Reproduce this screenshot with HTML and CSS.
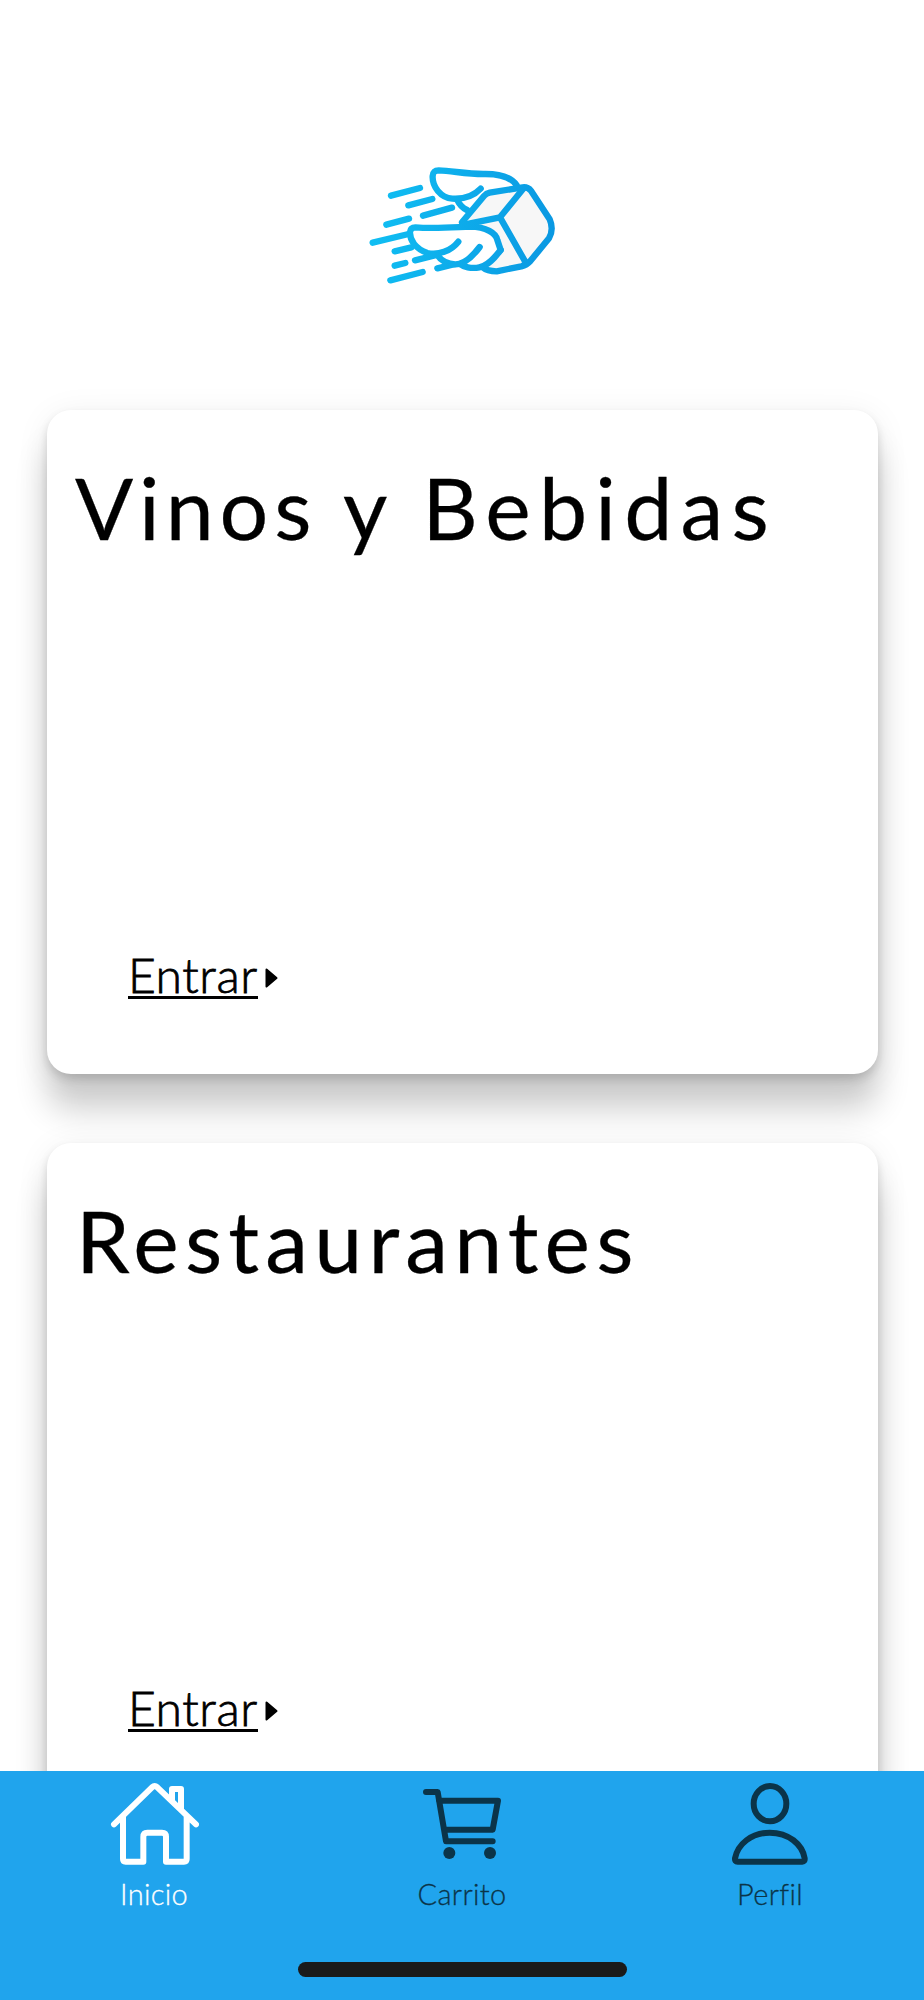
FILE: index.html
```html
<!DOCTYPE html>
<html lang="es">
<head>
  <meta charset="UTF-8" />
  <meta name="viewport" content="width=device-width, initial-scale=1.0"/>
  <title>Inicio</title>
  <link rel="stylesheet" href="styles.css">
</head>
<body>

<main class="content">
  <header class="logo-header">
    <svg class="logo" viewBox="6 0 660 450">
      <defs>
        <linearGradient id="logoBlue" gradientUnits="userSpaceOnUse" x1="60" y1="200" x2="610" y2="260">
          <stop offset="0" stop-color="#10bff3"/>
          <stop offset="1" stop-color="#0a98e2"/>
        </linearGradient>
      </defs>
      <g fill="none" stroke="url(#logoBlue)" stroke-width="19" stroke-linecap="round" stroke-linejoin="round">
        <!-- speed lines -->
        <path d="M123 137L210 114M175 166L247 147M219 197L306 173M109 224L177 206M68 278L176 252M134 304L184 292M134 347L166 339M195 331L260 315M121 391L218 366M262 355L316 342"/>
        <!-- back wing -->
        <path d="M392 116C372 137 340 148 307 146C272 143 246 110 248 78C249 66 254 61 266 61C310 63 347 72 400 72C447 71 482 79 500 106"/>
        <path d="M323 152C329 165 338 174 351 180"/>
        <!-- box -->
        <path fill="#f7f7f7" d="M336 217L402 138Q409 130 419 128L518 112Q533 110 543 122L599 208Q612 238 597 265L541 333Q530 345 514 349L440 364Q412 364 397 351L452 300Z"/>
        <path d="M519 117L450 202L529 341M450 202L342 224"/>
        <!-- front wing -->
        <path fill="#fff" stroke="none" d="M197 232L360 229C410 230 435 250 452 300L410 345C370 360 340 350 330 342C300 342 275 330 262 315C200 310 170 260 182 240Z"/>
        <path d="M325 275C302 304 265 316 232 309C196 296 179 270 180 246C181 236 186 232 196 232C250 237 310 232 360 230C409 231 438 249 442 270L452 300C433 325 414 347 388 352C363 357 340 350 330 342"/>
        <path d="M389 291C366 322 339 343 316 343C292 342 273 332 262 315"/>
      </g>
    </svg>
  </header>

  <section class="card-list">
    <article class="card">
      <h2 class="card-title card-title-drinks">Vinos y <span class="wide">Bebidas</span></h2>
      <a class="card-link" href="#"><span class="link-text">Entrar</span><svg class="caret" viewBox="0 0 13 20"><path d="M1.5 1.5L11.5 10L1.5 18.5Z"/></svg></a>
    </article>
    <article class="card">
      <h2 class="card-title card-title-food">Restaurantes</h2>
      <a class="card-link" href="#"><span class="link-text">Entrar</span><svg class="caret" viewBox="0 0 13 20"><path d="M1.5 1.5L11.5 10L1.5 18.5Z"/></svg></a>
    </article>
  </section>
</main>

<nav class="tab-bar">
  <div class="tabs">
    <a class="tab active" href="#">
      <svg class="tab-icon" viewBox="327 357 270 270">
        <path d="M342 493L456 382Q464 375 472 382L588 493M369 470V597Q369 605 377 605H430V530Q430 518 442 518H486Q498 518 498 530V605H552Q560 605 560 597V470M516 420V387H543V446"/>
      </svg>
      <span class="tab-label">Inicio</span>
    </a>
    <a class="tab" href="#">
      <svg class="tab-icon" viewBox="141 57 270 270">
        <path d="M168 96H203L228 244H368M207 122H384L368 209H223"/>
        <circle cx="238" cy="279" r="18"/>
        <circle cx="360" cy="279" r="18"/>
      </svg>
      <span class="tab-label">Carrito</span>
    </a>
    <a class="tab" href="#">
      <svg class="tab-icon" viewBox="105 57 270 270">
        <ellipse class="outline" cx="240" cy="131" rx="49" ry="53"/>
        <path d="M143 305H337Q345 305 344 295C337 253 296 218 239 218C184 218 143 253 135 295Q134 305 143 305Z"/>
      </svg>
      <span class="tab-label">Perfil</span>
    </a>
  </div>
  <div class="home-indicator"></div>
</nav>

</body>
</html>
```

FILE: styles.css
```css
* {
  box-sizing: border-box;
}
body {
  margin: 0;
  height: 2000px;
  display: flex;
  flex-direction: column;
  overflow: hidden;
  background: #fff;
  color: #000;
  font-family: Lato, "Open Sans", sans-serif;
}
a {
  color: inherit;
  text-decoration: none;
}
.content {
  flex: 1;
  min-height: 0;
  overflow: hidden;
}
.logo-header {
  display: flex;
  justify-content: center;
  padding: 150px 0 110px;
}
.logo {
  width: 220px;
  height: 150px;
}

/* Cards */
.card-list {
  display: flex;
  flex-direction: column;
  gap: 69px;
  padding: 0 46px 0 47px;
}
.card {
  display: flex;
  flex-direction: column;
  justify-content: space-between;
  height: 664px;
  padding: 45px 28px 75px;
  border-radius: 24px;
  background: #fff;
  box-shadow:
    0 5px 10px rgba(0, 0, 0, 0.14),
    0 36px 32px rgba(0, 0, 0, 0.19),
    0 5px 34px rgba(0, 0, 0, 0.07);
}
.card-title {
  margin: 0;
  font-size: 86px;
  font-weight: 400;
  line-height: 104px;
  white-space: nowrap;
  -webkit-text-stroke: 0.3px #000;
}
.card-title-drinks {
  letter-spacing: 5.9px;
}
.card-title-drinks .wide {
  margin-left: 3px;
  letter-spacing: 8.2px;
}
.card-title-food {
  padding-left: 1px;
  letter-spacing: 6.2px;
}
.card-link {
  display: flex;
  align-items: center;
  padding-left: 53px;
  font-size: 48px;
  font-weight: 300;
  line-height: 60px;
}
.link-text {
  border-bottom: 3px solid #000;
  line-height: 42px;
  letter-spacing: 0.6px;
  -webkit-text-stroke: 0.8px #000;
}
.caret {
  width: 13px;
  height: 20px;
  margin: 3px 0 0 7px;
  stroke: #000;
  stroke-width: 2;
  stroke-linejoin: round;
}

/* Bottom navigation */
.tab-bar {
  height: 229px;
  padding: 8px 0 23px;
  display: flex;
  flex-direction: column;
  justify-content: space-between;
  align-items: center;
  background: #20a4ed;
}
.tabs {
  width: 100%;
  display: grid;
  grid-template-columns: repeat(3, 1fr);
}
.tab {
  display: flex;
  flex-direction: column;
  align-items: center;
  color: #0b3449;
  fill: #0b3449;
}
.tab.active {
  color: #fff;
}
.tab-icon {
  width: 90px;
  height: 90px;
}
.tab-icon path,
.tab-icon .outline {
  fill: none;
  stroke: currentColor;
  stroke-width: 18;
  stroke-linecap: round;
  stroke-linejoin: round;
}
.tab-label {
  margin-top: 7px;
  font-size: 29px;
  font-weight: 300;
  line-height: 36px;
  letter-spacing: 0.3px;
  -webkit-text-stroke: 0.3px currentColor;
}
.home-indicator {
  width: 329px;
  height: 15px;
  border-radius: 8px;
  background: #1a1a1a;
}
```
